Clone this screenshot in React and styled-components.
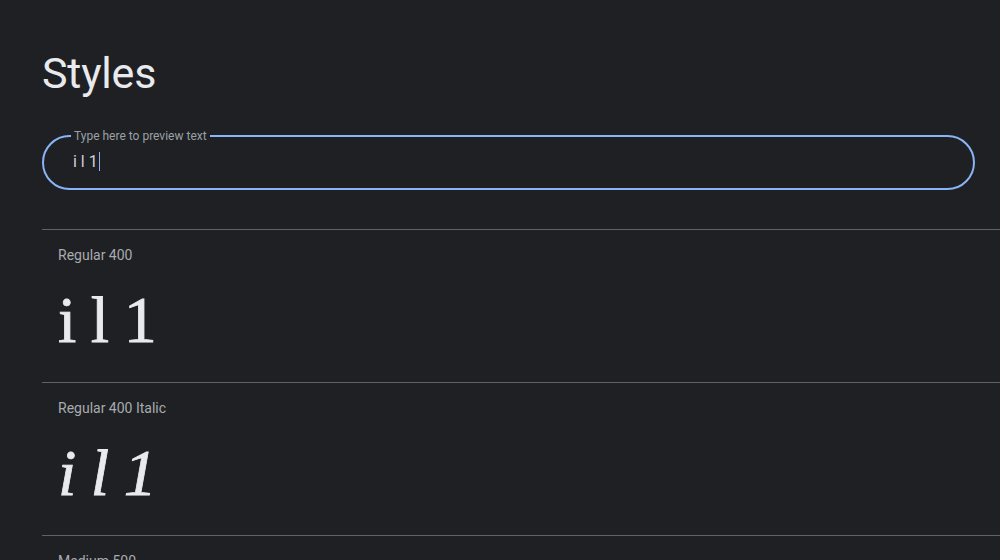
import React from "react";
import styled, { createGlobalStyle } from "styled-components";

const Global = createGlobalStyle`
  html, body { margin: 0; padding: 0; background: #1f2023; overflow: hidden; }
  body { font-family: Roboto, "Noto Sans", sans-serif; color: #e8eaed; }
`;

const Page = styled.div`
  width: 1000px;
  height: 560px;
  overflow: hidden;
  padding: 47px 0 0 42px;
  box-sizing: border-box;
  background: #1f2023;
`;

const Title = styled.h1`
  margin: 0;
  font-family: Roboto, "Open Sans", sans-serif;
  font-weight: 400;
  font-size: 43px;
  line-height: 52px;
  color: #e8eaed;
  letter-spacing: -0.2px;
`;

const Field = styled.fieldset`
  margin: 31px 25px 0 0;
  height: 60px;
  box-sizing: border-box;
  border: 2px solid #8ab4f8;
  border-radius: 28px;
  padding: 0 0 0 27px;
  display: flex;
  align-items: center;
`;

const Legend = styled.legend`
  margin-left: 0;
  padding: 0 3px;
  font-size: 12px;
  line-height: 12px;
  color: #9aa0a6;
  font-family: Roboto, sans-serif;
`;

const InputText = styled.div`
  display: flex;
  align-items: center;
  margin-top: -8px;
  padding-left: 2px;
  font-size: 16px;
  color: #d0d3d6;
  font-family: Roboto, sans-serif;
  white-space: pre;
`;

const Caret = styled.span`
  display: inline-block;
  width: 1px;
  height: 19px;
  background: #8ab4f8;
  margin-left: 1px;
`;

const List = styled.div`
  margin-top: 39px;
`;

const Row = styled.section`
  border-top: 1px solid #5f6368;
  height: 153px;
  box-sizing: border-box;
  padding: 15px 0 0 16px;
`;

const Label = styled.div`
  font-size: 14px;
  line-height: 20px;
  color: #a8abaf;
  font-family: Roboto, sans-serif;
`;

const Preview = styled.div`
  margin-top: 15px;
  font-family: "Liberation Serif", "DejaVu Serif", serif;
  font-size: 66px;
  line-height: 80px;
  color: #e8eaed;
  -webkit-text-stroke: 0.8px #e8eaed;
  font-style: ${(p) => (p.$italic ? "italic" : "normal")};
  font-weight: ${(p) => p.$weight};
  letter-spacing: -1px;
  white-space: pre;
`;

const styles = [
  { label: "Regular 400", weight: 400, italic: false },
  { label: "Regular 400 Italic", weight: 400, italic: true },
  { label: "Medium 500", weight: 500, italic: false },
];

export default function App() {
  return (
    <Page>
      <Global />
      <Title>Styles</Title>
      <Field>
        <Legend>Type here to preview text</Legend>
        <InputText>
          i l 1<Caret />
        </InputText>
      </Field>
      <List>
        {styles.map((s) => (
          <Row key={s.label}>
            <Label>{s.label}</Label>
            <Preview $italic={s.italic} $weight={s.weight}>
              i l 1
            </Preview>
          </Row>
        ))}
      </List>
    </Page>
  );
}
